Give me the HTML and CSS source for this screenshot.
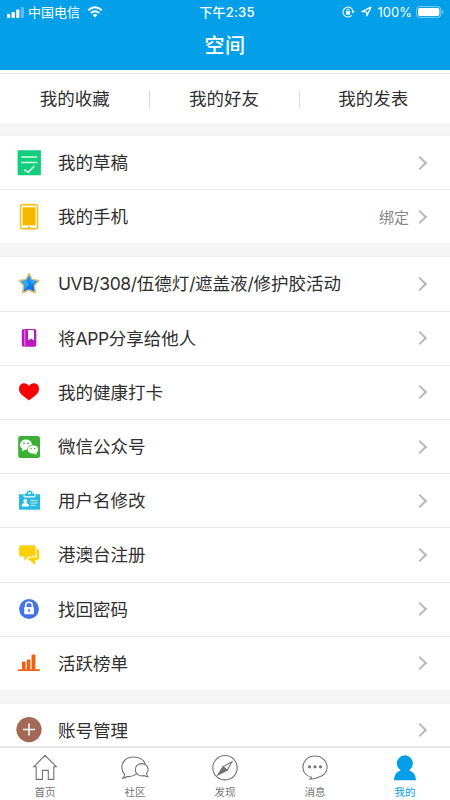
FILE: index.html
```html
<!DOCTYPE html>
<html lang="zh-CN">
<head>
<meta charset="utf-8">
<title>空间</title>
<link rel="stylesheet" href="styles.css">
</head>
<body>
<div class="app">
<header class="header">
  <div class="status">
    <div class="status-left">
      <svg width="18" height="12" viewBox="0 0 18 12" fill="#fff"><rect y="8" width="3.2" height="4" rx=".8"/><rect x="4.6" y="6" width="3.2" height="6" rx=".8"/><rect x="9.2" y="3.5" width="3.2" height="8.5" rx=".8"/><rect x="13.8" y="1" width="3.2" height="11" rx=".8" opacity=".35"/></svg>
      <span class="carrier">中国电信</span>
      <svg class="wifi" width="16" height="12" viewBox="0 0 16 12"><path d="M1.2 4.3Q8-1.7 14.8 4.3M3.8 7Q8 3.4 12.2 7" fill="none" stroke="#fff" stroke-width="2"/><path d="M5.6 9Q8 7.2 10.4 9L8 11.5z" fill="#fff"/></svg>
    </div>
    <div class="time">下午2:35</div>
    <div class="status-right">
      <svg width="13" height="12" viewBox="0 0 13 12"><path d="M9.7 9.400A5 5 0 1 1 10.900 5" fill="none" stroke="#fff" stroke-width="1.1"/><path d="M9.300 5h3.500l-1.700 2.400z" fill="#fff"/><rect x="3.900" y="5.400" width="4.200" height="3.200" fill="#fff"/><path d="M4.800 5.500V4.300a1.200 1.200 0 0 1 2.400 0v1.200" fill="none" stroke="#fff" stroke-width=".9"/></svg>
      <svg class="locate" width="11" height="11" viewBox="0 0 11 11"><path d="M1 5.7L9.9 1.2 6 9.8 5.5 5.8z" fill="none" stroke="#fff" stroke-width="1.3" stroke-linejoin="round"/></svg>
      <span class="percent">100%</span>
      <svg class="battery" width="28" height="12" viewBox="0 0 28 12"><rect x=".6" y=".6" width="24.2" height="10.8" rx="3" fill="none" stroke="#fff" opacity=".5"/><rect x="2" y="2" width="21.4" height="8" rx="1.7" fill="#fff"/><path d="M26 4v4q1.5-.7 1.5-2T26 4" fill="#fff" opacity=".5"/></svg>
    </div>
  </div>
  <h1>空间</h1>
</header>
<nav class="tabs"><a>我的收藏</a><a>我的好友</a><a>我的发表</a></nav>
<main>
<section class="group">
  <div class="row"><svg class="icon" viewBox="0 0 30 30"><rect x="3.6" y="2.2" width="23.3" height="25" rx=".6" fill="#13ce7c"/><path d="M7.2 8.9h16M7.2 14.6h16" stroke="#d2ffe9" stroke-width="1.5"/><path d="M10.3 21.7l4 2.7 6-6.4" fill="none" stroke="#d2ffe9" stroke-width="1.7"/></svg><span class="label">我的草稿</span><i class="arrow"></i></div>
  <div class="row"><svg class="icon" viewBox="0 0 30 30"><rect x="6.5" y="2.7" width="17.1" height="24" rx="2" fill="#fffbe9" stroke="#f7bd18" stroke-width="1.4"/><rect x="8.6" y="5.3" width="13" height="18" fill="#f6b900"/><rect x="14" y="24.5" width="2.2" height="1.6" rx=".6" fill="#f6b900"/></svg><span class="label">我的手机</span><span class="extra">绑定</span><i class="arrow"></i></div>
</section>
<section class="group">
  <div class="row"><svg class="icon" viewBox="0 0 30 30"><defs><linearGradient id="sky" x2=".7" y2="1"><stop stop-color="#20a8ff"/><stop offset=".5" stop-color="#198df5"/><stop offset="1" stop-color="#085de3"/></linearGradient></defs><path d="M15 4.700l3.100 5.800 6.700 1-4.400 5 .9 7.200-6.300-2.700-6.300 2.700.9-7.200-4.400-5 6.700-1z" fill="url(#sky)" stroke="#dfbd78" stroke-width="1.500" stroke-linejoin="round"/><path d="M15 6.500l2.500 5.500 5.500.8-5.300 2.500zM12 12l3 3.200-5 5.800 1-5-3.500-3.600z" fill="#2cc0ff" opacity=".75"/></svg><span class="label"><span class="latin">UVB/308/</span>伍德灯<span class="latin">/</span>遮盖液<span class="latin">/</span>修护胶活动</span><i class="arrow"></i></div>
  <div class="row"><svg class="icon" viewBox="0 0 30 30"><rect x="7.8" y="6.1" width="14.5" height="17.6" rx="1.8" fill="#ba18bd"/><path d="M10.8 6.5v16.8" stroke="#efb5f0" stroke-width=".8"/><path d="M14 7.1h6v10.4l-2.8-2-3.2 2z" fill="#fff"/></svg><span class="label">将<span class="latin">APP</span>分享给他人</span><i class="arrow"></i></div>
  <div class="row"><svg class="icon" viewBox="0 0 30 30"><path d="M15 23.400C11.500 20.200 5 17.500 5 12 5 5.800 12 4.500 15 9 18 4.500 25 5.800 25 12 25 17.500 18.500 20.200 15 23.400z" fill="#f00"/></svg><span class="label">我的健康打卡</span><i class="arrow"></i></div>
  <div class="row"><svg class="icon" viewBox="0 0 30 30"><rect x="4.200" y="4" width="21.800" height="22" rx="2.500" fill="#3cb035"/><ellipse cx="12" cy="12.700" rx="6" ry="5.100" fill="#fff"/><path d="M8.500 16l-.7 3.500 3.500-2z" fill="#fff"/><ellipse cx="19" cy="17.500" rx="5.600" ry="4.600" fill="#fff" stroke="#3cb035" stroke-width=".8"/><path d="M20 21.300l2.700 1.700-.4-2.700z" fill="#fff"/><g fill="#3cb035"><circle cx="10" cy="11.300" r=".9"/><circle cx="14" cy="11.300" r=".9"/><circle cx="17" cy="16.400" r=".75"/><circle cx="20.700" cy="16.400" r=".75"/></g></svg><span class="label">微信公众号</span><i class="arrow"></i></div>
  <div class="row"><svg class="icon" viewBox="0 0 30 30"><path d="M5 8.300h21v15.400H5z" fill="#27b8e6"/><path d="M9.600 8.200h11.700v2.100q0 1.200-1.200 1.200h-9.300q-1.200 0-1.200-1.200z" fill="#fff"/><path d="M10.600 7.500h2a2.900 2.900 0 0 1 5.800 0h2v2.700h-9.800z" fill="#27b8e6"/><circle cx="15.500" cy="7.300" r="1.300" fill="#fff"/><circle cx="11.300" cy="15" r="1.900" fill="#fff"/><path d="M7.600 20.400q0-3.300 3.700-3.300t3.700 3.300z" fill="#fff"/><path d="M16.500 14.600h7M16.500 17h7M16.500 19.400h5" stroke="#c9f2ff"/></svg><span class="label">用户名修改</span><i class="arrow"></i></div>
  <div class="row"><svg class="icon" viewBox="0 0 30 30"><path d="M23 8.500q2.300.4 2.300 2.500v6q0 3-3 3.200h-1.400v4.700l-5.200-4.700h-2.400l2.800-2.700h4q2.900 0 2.900-2.700z" fill="#ffd000"/><path d="M7.500 5.200h11.700q2.700 0 2.700 2.700v5.800q0 2.700-2.700 2.700h-4.400l-4.600 4.200v-4.200H7.500q-2.500 0-2.500-2.700V7.900q0-2.700 2.500-2.700z" fill="#ffd000" stroke="#ead99c" stroke-width=".7"/></svg><span class="label">港澳台注册</span><i class="arrow"></i></div>
  <div class="row"><svg class="icon" viewBox="0 0 30 30"><circle cx="15" cy="15" r="9.900" fill="#4174e7"/><path d="M11.700 13.600v-2a3.300 3.300 0 0 1 6.600 0v2" fill="none" stroke="#fff" stroke-width="1.500"/><rect x="10.200" y="13.100" width="9.700" height="7.200" rx=".8" fill="#fff"/><circle cx="15" cy="16" r="1" fill="#4174e7"/><path d="M15 16.300v2" stroke="#4174e7"/></svg><span class="label">找回密码</span><i class="arrow"></i></div>
  <div class="row"><svg class="icon" viewBox="0 0 30 30"><g fill="#ef6110"><rect x="4" y="21.200" width="22" height="1.700" rx=".7"/><rect x="8" y="13.500" width="3.600" height="8.200" rx=".6"/><rect x="12.700" y="11.500" width="3.600" height="10.200" rx=".6"/><rect x="17.500" y="6.500" width="3.900" height="15.200" rx=".6"/></g></svg><span class="label">活跃榜单</span><i class="arrow"></i></div>
</section>
<section class="group last">
  <div class="row"><svg class="icon" viewBox="0 0 30 30"><circle cx="15" cy="14.600" r="12.600" fill="#a46954"/><path d="M9 14.600h12M15 8.600v12" stroke="#fff" stroke-width="1.500"/></svg><span class="label">账号管理</span><i class="arrow"></i></div>
</section>
</main>
<nav class="bottom">
  <a><svg viewBox="0 0 30 28"><path d="M3.700 13.800L15 2.300l11.300 11.500h-2.500v12.600h-5.500v-9h-5.800v9H6.200V13.800z"/></svg><span>首页</span></a>
  <a><svg viewBox="0 0 30 28"><path d="M16.600 20.900Q12.500 24.300 7 23.500 5.500 25 2.700 25.200 4.800 23.300 4.500 21.200 1.900 18.700 1.900 14.700C1.900 8.500 6.500 4 13.500 4c6 0 10.200 2.800 11.700 7"/><path d="M26.400 20.700q.3 1.900 1.500 3-2 0-3.600-1.100c-5.500 1.200-9-2-9-5.700 0-3.500 2.500-6.300 6.500-6.300s6.300 2.800 6.300 5.800q0 2.500-1.700 4.300z"/></svg><span>社区</span></a>
  <a><svg viewBox="0 0 30 28"><circle cx="15" cy="14.700" r="12.200"/><path d="M22 8.800l-4.800 8.300-9 4.500 5-8z"/><path d="M13.200 13.600l4 3.500-9 4.500z" fill="#737373"/></svg><span>发现</span></a>
  <a><svg viewBox="0 0 30 28"><path d="M11.500 24.300C6.500 23.300 2.900 19.200 2.900 14.300c0-6.200 5-11.300 12-11.300s12.200 5.100 12.200 11.300c0 4.900-3.700 8.500-8.100 9.700-2.800 1.500-5.700 2.500-8.900 1.900q1.500-.5 1.400-1.600z"/><g fill="#737373" stroke="none"><circle cx="9.500" cy="13.800" r="1.600"/><circle cx="15" cy="13.800" r="1.600"/><circle cx="20.500" cy="13.800" r="1.600"/></g></svg><span>消息</span></a>
  <a class="active"><svg viewBox="0 0 30 28"><path d="M10.700 17.200A8 8 0 1 1 19 17.200Q25.500 19.200 26 27.200H4q.4-8 6.700-10z" fill="#049ee8" stroke="none"/></svg><span>我的</span></a>
</nav>
</div>
</body>
</html>
```
FILE: styles.css
```css
* { box-sizing: border-box; }
body {
  margin: 0;
  color: #303030;
  font-family: Inter, "Noto Sans CJK SC", sans-serif;
}
svg { display: block; flex: none; }
.app {
  display: flex;
  flex-direction: column;
  width: 450px;
  height: 800px;
  overflow: hidden;
  background: #f5f5f5;
}
.header {
  flex: none;
  height: 70px;
  background: #039fe9;
  color: #fff;
}
.status {
  display: grid;
  grid-template-columns: 1fr auto 1fr;
  align-items: center;
  height: 23px;
  padding: 0 6px 0 7px;
  font-size: 13px;
  line-height: 22px;
}
.status-left, .status-right { display: flex; align-items: center; }
.status-right { justify-content: flex-end; }
.carrier { margin-left: 3px; }
.wifi { margin-left: 7px; }
.time { padding-left: 3px; font-weight: 500; letter-spacing: .25px; }
.locate { margin-left: 6px; }
.percent { margin-left: 6px; }
.battery { margin-left: 4px; }
h1 {
  margin: 0;
  font-size: 20px;
  font-weight: 500;
  line-height: 47px;
  text-align: center;
  letter-spacing: .4px;
}
.tabs {
  display: flex;
  flex: none;
  height: 53px;
  padding: 5px 2px 0 0;
  background: linear-gradient(#fff 3px, #e7e7e7 3px, #e7e7e7 4px, #fff 4px);
}
.tabs a {
  display: flex;
  align-items: center;
  justify-content: center;
  flex: 1;
  font-size: 17.5px;
  line-height: 26px;
}
.tabs a + a {
  background: linear-gradient(#ddd, #ddd) 0 50% / 1px 19px no-repeat;
}
main { flex: 1; min-height: 0; overflow: hidden; }
.group {
  margin-top: 12px;
  border-top: 1px solid #f2f2f2;
  background: #fff;
}
.group + .group { margin-top: 12px; }
.row {
  display: flex;
  align-items: center;
  height: 54.2px;
  padding: 0 22px 0 14px;
  border-bottom: 1px solid #ebebeb;
}
.row:last-child { border-color: #f2f2f2; }
.icon { width: 30px; height: 30px; }
.label {
  margin-left: 14px;
  padding-top: 1px;
  font-size: 17.5px;
  line-height: 26px;
  white-space: nowrap;
}
.latin { letter-spacing: -.4px; }
.extra { margin-left: auto; margin-right: 6px; color: #858585; font-size: 15px; }
.arrow {
  width: 10px;
  height: 10px;
  margin-left: auto;
  margin-right: 3px;
  border: solid #b8b8b8;
  border-width: 2px 2px 0 0;
  transform: rotate(45deg);
}
.extra + .arrow { margin-left: 0; }
.bottom {
  display: flex;
  flex: none;
  height: 54px;
  border-top: 2px solid #e6e6e6;
  background: #fff;
}
.bottom a {
  display: flex;
  align-items: center;
  flex: 1;
  flex-direction: column;
  padding-top: 5px;
  color: #737373;
  font-size: 10.5px;
  line-height: 16px;
}
.bottom svg { width: 30px; height: 28px; fill: none; stroke: #737373; stroke-width: 1.1; }
.bottom span { margin-top: 4px; }
.bottom .active { color: #049ee8; }
```
